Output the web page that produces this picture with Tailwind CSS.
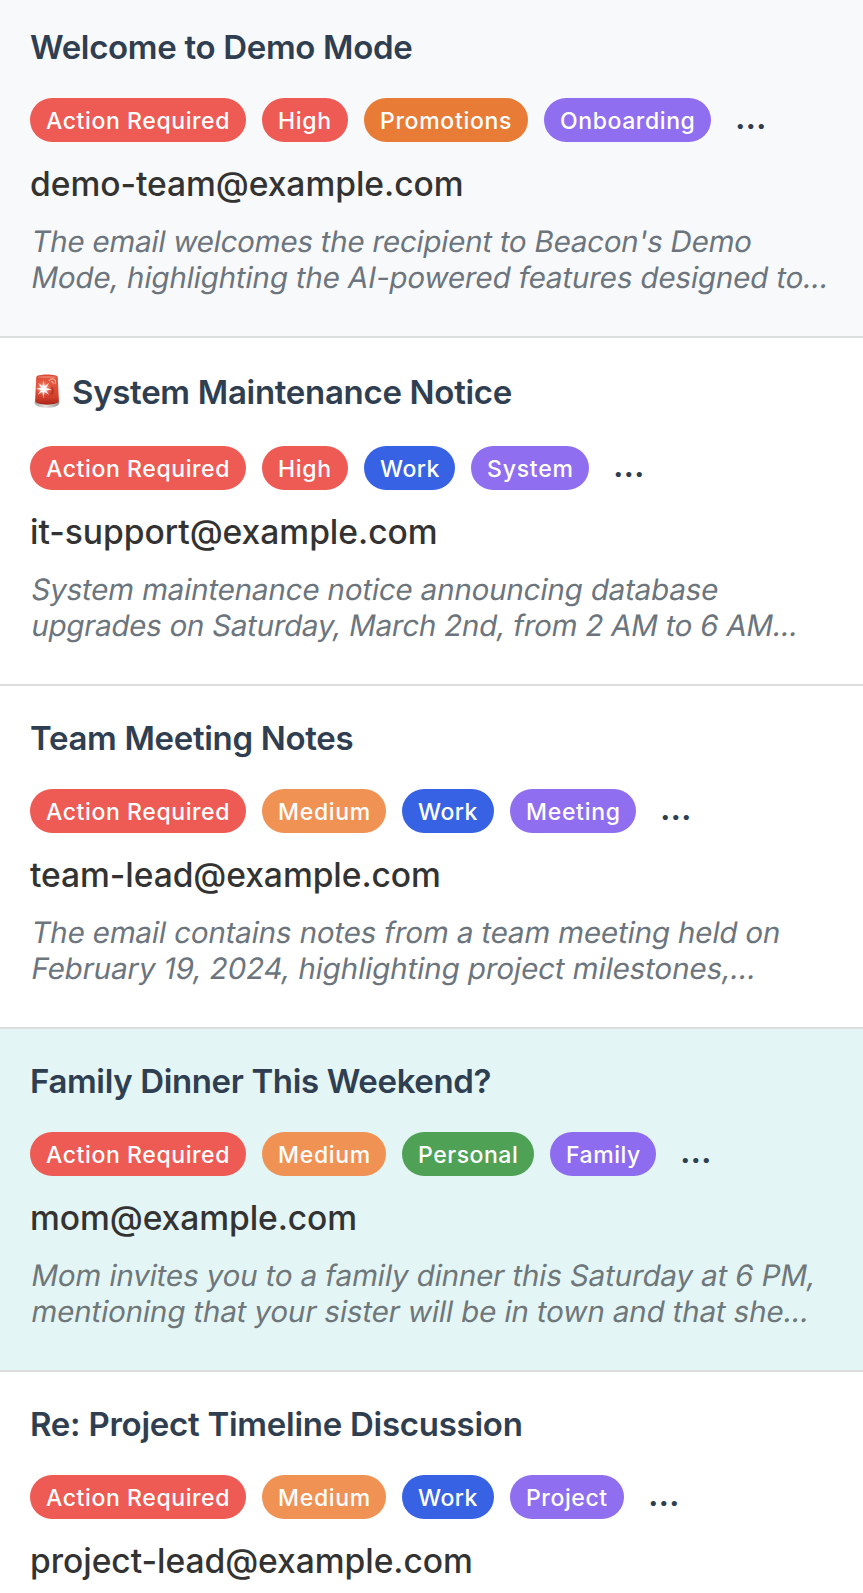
<!DOCTYPE html>
<html lang="en">
<head>
<meta charset="utf-8">
<meta name="viewport" content="width=device-width, initial-scale=1">
<title>Inbox</title>
<script src="https://cdn.jsdelivr.net/npm/@tailwindcss/browser@4"></script>
</head>
<body class="h-[1593px] overflow-hidden bg-white font-['Inter',sans-serif]">
<main class="h-[1593px] overflow-hidden">

  <article class="h-[338px] border-b-2 border-[#dcdddf] bg-[#f8f9fb] px-[30px] pt-[27px]">
    <h2 class="mb-[31px] h-10 text-[33px] leading-10 font-semibold tracking-[-0.32px] whitespace-nowrap text-[#2f3e50]">Welcome to Demo Mode</h2>
    <div class="flex h-11 gap-4 text-[23px] leading-[46px] font-medium whitespace-nowrap text-white">
      <span class="w-[216px] rounded-full bg-[#ee5a54] pl-4 tracking-[0.6px]">Action Required</span>
      <span class="w-[86px] rounded-full bg-[#ee5a54] pl-4 tracking-[0.7px]">High</span>
      <span class="w-[164px] rounded-full bg-[#e87c36] pl-4 tracking-[0.7px]">Promotions</span>
      <span class="w-[167px] rounded-full bg-[#906ef0] pl-4 tracking-[0.6px]">Onboarding</span>
      <span class="ml-2 text-[33px] leading-[38px] font-semibold text-[#2f3e50]">...</span>
    </div>
    <p class="mt-[22px] h-10 text-[33.6px] leading-10 font-medium tracking-[-0.04px] whitespace-nowrap text-[#333]">demo-team@example.com</p>
    <p class="mt-[19px] text-[29.5px] leading-9 whitespace-nowrap text-[#6c757d]"><span class="block origin-[0_80%] -skew-x-[10deg] tracking-[-0.222px]">The email welcomes the recipient to Beacon's Demo</span><span class="block origin-[0_80%] -skew-x-[10deg] tracking-[-0.126px]">Mode, highlighting the AI-powered features designed to...</span></p>
  </article>

  <article class="h-[348px] border-b-2 border-[#dcdcdc] bg-white px-[30px] pt-[34px]">
    <h2 class="mb-[34px] flex h-10 text-[33px] leading-10 font-semibold tracking-[-0.3px] whitespace-nowrap text-[#2f3e50]">
      <svg class="mr-2.5 h-10 w-8 shrink-0" viewBox="0 0 32 40" fill="none" aria-label="Police car light" role="img">
        <defs>
          <linearGradient id="dome" x1="0" y1="0" x2="0" y2="1"><stop offset="0" stop-color="#d94834"/><stop offset=".25" stop-color="#e4583f"/><stop offset=".75" stop-color="#d23f2d"/><stop offset="1" stop-color="#a82417"/></linearGradient>
          <linearGradient id="base" x1="0" y1="0" x2="1" y2="0"><stop offset="0" stop-color="#a5a5a3"/><stop offset=".45" stop-color="#e8e6e2"/><stop offset="1" stop-color="#8f8f8d"/></linearGradient>
          <radialGradient id="glow"><stop offset="0" stop-color="#fff"/><stop offset=".4" stop-color="#ffd6cc" stop-opacity=".75"/><stop offset="1" stop-color="#f0705a" stop-opacity="0"/></radialGradient>
        </defs>
        <path d="M4.600 30.600c0-1.500 1-2.600 2-2.600h20.800c1 0 2 1.100 2 2.600 0 3.400-5.600 5.300-12.400 5.300S4.600 34 4.600 30.600z" fill="url(#base)"/>
        <path d="M6.200 5.500C6.300 3.500 11 2.600 17 2.600s10.700.900 10.800 2.900l1.100 23.300c0 2.300-5 3.900-11.900 3.900S5.100 31.100 5.100 28.800z" fill="url(#dome)"/>
        <path d="M7.200 5.300c1.500-1.800 18-1.800 19.600 0-2.600 1.200-17 1.200-19.600 0z" fill="#f08b76" opacity=".7"/>
        <path d="M19 9c1-2.500 5-3 6.300-.500.600 1.300.300 2.600-.300 3.500M21 9.800c1.500-.500 2.500.500 2.400 2" stroke="#f8b0a0" stroke-width="1.100"/>
        <path d="M21.500 15.500c2 2 2 5-.500 7" stroke="#a52a1d" stroke-width="2" opacity=".6"/>
        <circle cx="13.600" cy="16.600" r="8" fill="url(#glow)" opacity=".8"/>
        <path d="M13.600 8l.9 6.300 4.700-3.400-3.200 5.100 6 1.400-5.900 1 3 4.600-4.600-3.200-1.100 6.600-1-6.700-4.600 3 3.200-4.600-5.200-1.400 5.300-1-3-4.600 4.600 3z" fill="#fff" opacity=".9"/>
      </svg><span>System Maintenance Notice</span></h2>
    <div class="flex h-11 gap-4 text-[23px] leading-[46px] font-medium whitespace-nowrap text-white">
      <span class="w-[216px] rounded-full bg-[#ee5a54] pl-4 tracking-[0.6px]">Action Required</span>
      <span class="w-[86px] rounded-full bg-[#ee5a54] pl-4 tracking-[0.7px]">High</span>
      <span class="w-[91px] rounded-full bg-[#3762e4] pl-4 tracking-[0.48px]">Work</span>
      <span class="w-[118px] rounded-full bg-[#906ef0] pl-4 tracking-[0.78px]">System</span>
      <span class="ml-2 text-[33px] leading-[38px] font-semibold text-[#2f3e50]">...</span>
    </div>
    <p class="mt-[22px] h-10 text-[33.6px] leading-10 font-medium tracking-[-0.02px] whitespace-nowrap text-[#333]">it-support@example.com</p>
    <p class="mt-[19px] text-[29.5px] leading-9 whitespace-nowrap text-[#6c757d]"><span class="block origin-[0_80%] -skew-x-[10deg] tracking-[-0.155px]">System maintenance notice announcing database</span><span class="block origin-[0_80%] -skew-x-[10deg] tracking-[-0.248px]">upgrades on Saturday, March 2nd, from 2 AM to 6 AM...</span></p>
  </article>

  <article class="h-[343px] border-b-2 border-[#dcdcdc] bg-white px-[30px] pt-8">
    <h2 class="mb-[31px] h-10 text-[33px] leading-10 font-semibold tracking-[-0.318px] whitespace-nowrap text-[#2f3e50]">Team Meeting Notes</h2>
    <div class="flex h-11 gap-4 text-[23px] leading-[46px] font-medium whitespace-nowrap text-white">
      <span class="w-[216px] rounded-full bg-[#ee5a54] pl-4 tracking-[0.6px]">Action Required</span>
      <span class="w-[124px] rounded-full bg-[#f09254] pl-4 tracking-[0.7px]">Medium</span>
      <span class="w-[92px] rounded-full bg-[#3762e4] pl-4 tracking-[0.48px]">Work</span>
      <span class="w-[126px] rounded-full bg-[#906ef0] pl-4 tracking-[0.7px]">Meeting</span>
      <span class="ml-2 text-[33px] leading-[38px] font-semibold text-[#2f3e50]">...</span>
    </div>
    <p class="mt-[22px] h-10 text-[33.6px] leading-10 font-medium tracking-[-0.06px] whitespace-nowrap text-[#333]">team-lead@example.com</p>
    <p class="mt-[19px] text-[29.5px] leading-9 whitespace-nowrap text-[#6c757d]"><span class="block origin-[0_80%] -skew-x-[10deg] tracking-[-0.145px]">The email contains notes from a team meeting held on</span><span class="block origin-[0_80%] -skew-x-[10deg] tracking-[-0.078px]">February 19, 2024, highlighting project milestones,...</span></p>
  </article>

  <article class="h-[343px] border-b-2 border-[#dcdcdc] bg-[#e3f5f5] px-[30px] pt-8">
    <h2 class="mb-[31px] h-10 text-[33px] leading-10 font-semibold tracking-[-0.36px] whitespace-nowrap text-[#2f3e50]">Family Dinner This Weekend?</h2>
    <div class="flex h-11 gap-4 text-[23px] leading-[46px] font-medium whitespace-nowrap text-white">
      <span class="w-[216px] rounded-full bg-[#ee5a54] pl-4 tracking-[0.6px]">Action Required</span>
      <span class="w-[124px] rounded-full bg-[#f09254] pl-4 tracking-[0.7px]">Medium</span>
      <span class="w-[132px] rounded-full bg-[#4ea155] pl-4 tracking-[0.54px]">Personal</span>
      <span class="w-[106px] rounded-full bg-[#8e6cef] pl-4 tracking-[0.54px]">Family</span>
      <span class="ml-2 text-[33px] leading-[38px] font-semibold text-[#2f3e50]">...</span>
    </div>
    <p class="mt-[22px] h-10 text-[33.6px] leading-10 font-medium tracking-[-0.07px] whitespace-nowrap text-[#333]">mom@example.com</p>
    <p class="mt-[19px] text-[29.5px] leading-9 whitespace-nowrap text-[#6f777a]"><span class="block origin-[0_80%] -skew-x-[10deg] tracking-[-0.12px]">Mom invites you to a family dinner this Saturday at 6 PM,</span><span class="block origin-[0_80%] -skew-x-[10deg] tracking-[-0.114px]">mentioning that your sister will be in town and that she...</span></p>
  </article>

  <article class="bg-white px-[30px] pt-8">
    <h2 class="mb-[31px] h-10 text-[33px] leading-10 font-semibold tracking-[-0.26px] whitespace-nowrap text-[#2f3e50]">Re: Project Timeline Discussion</h2>
    <div class="flex h-11 gap-4 text-[23px] leading-[46px] font-medium whitespace-nowrap text-white">
      <span class="w-[216px] rounded-full bg-[#ee5a54] pl-4 tracking-[0.6px]">Action Required</span>
      <span class="w-[124px] rounded-full bg-[#f09254] pl-4 tracking-[0.7px]">Medium</span>
      <span class="w-[92px] rounded-full bg-[#3762e4] pl-4 tracking-[0.48px]">Work</span>
      <span class="w-[114px] rounded-full bg-[#906ef0] pl-4 tracking-[0.6px]">Project</span>
      <span class="ml-2 text-[33px] leading-[38px] font-semibold text-[#2f3e50]">...</span>
    </div>
    <p class="mt-[22px] h-10 text-[33.6px] leading-10 font-medium tracking-[-0.04px] whitespace-nowrap text-[#333]">project-lead@example.com</p>
  </article>

</main>
</body>
</html>
